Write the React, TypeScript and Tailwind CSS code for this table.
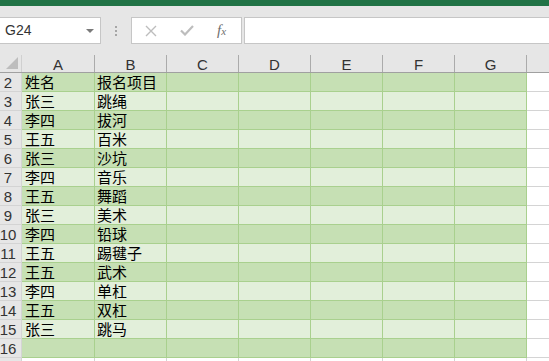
import React from 'react';

const names = ['姓名', '张三', '李四', '王五', '张三', '李四', '王五', '张三', '李四', '王五', '王五', '李四', '王五', '张三', ''];
const items = ['报名项目', '跳绳', '拔河', '百米', '沙坑', '音乐', '舞蹈', '美术', '铅球', '踢毽子', '武术', '单杠', '双杠', '跳马', ''];
const cols = ['A', 'B', 'C', 'D', 'E', 'F', 'G'];

const gridCols = 'grid-cols-[22px_73px_72px_72px_72px_72px_72px_72px_1fr]';

function CrossIcon() {
    return (
        <svg width="12" height="12" viewBox="0 0 12 12" fill="none" stroke="#bdbdbd" strokeWidth="1.4">
            <path d="M1 1l10 10M11 1L1 11" />
        </svg>
    );
}

function CheckIcon() {
    return (
        <svg width="14" height="11" viewBox="0 0 14 11" fill="none" stroke="#bdbdbd" strokeWidth="2.2">
            <path d="M1 5.5l4 4L13 1" />
        </svg>
    );
}

export default function App() {
    return (
        <div className="w-[549px] h-[361px] overflow-hidden bg-[#e6e6e6] font-['Liberation_Sans','Noto_Sans_CJK_SC',sans-serif]">
            {/* title strip */}
            <div className="h-[6px] bg-[#217346]" />

            {/* formula bar */}
            <div className="flex items-stretch h-[27px] mt-[11px]">
                <div className="w-[101px] bg-white border border-l-0 border-[#c6c6c6] flex items-center justify-between pl-[5px] pr-[6px]">
                    <span className="text-[14px] text-[#333]">G24</span>
                    <span className="w-0 h-0 border-l-[4px] border-r-[4px] border-t-[4px] border-l-transparent border-r-transparent border-t-[#7a7a7a]" />
                </div>
                <div className="w-[30px] flex flex-col items-center justify-center gap-[2px]">
                    <span className="w-[2px] h-[2px] bg-[#a6a6a6]" />
                    <span className="w-[2px] h-[2px] bg-[#a6a6a6]" />
                    <span className="w-[2px] h-[2px] bg-[#a6a6a6]" />
                </div>
                <div className="w-[111px] bg-white border border-[#c6c6c6] flex items-center pl-[13px]">
                    <CrossIcon />
                    <span className="ml-[23px]"><CheckIcon /></span>
                    <span className="ml-[23px] text-[15px] italic text-[#6e6e6e] font-['Liberation_Serif',serif] leading-none">
                        f<span className="text-[11px]">x</span>
                    </span>
                </div>
                <div className="flex-1 ml-[2px] bg-white border border-r-0 border-[#c6c6c6]" />
            </div>

            {/* column headers */}
            <div className={`grid ${gridCols} h-[18px] mt-[11px] border-b border-[#a0a0a0]`}>
                <div className="border-r border-[#d0d0d0] flex items-end justify-end pr-[3px] pb-[3px]">
                    {/* select-all corner */}
                    <div className="w-[12px] h-[12px] shrink-0 bg-[#bdbdbd] [clip-path:polygon(100%_0,100%_100%,0_100%)]" />
                </div>
                {cols.map((c) => (
                    <div key={c} className="border-r border-[#ababab] flex items-center justify-center text-[15px] text-[#333] leading-none pt-[1px]">
                        {c}
                    </div>
                ))}
                <div />
            </div>

            {/* sheet rows */}
            {names.map((n, i) => {
                const dark = i % 2 === 0;
                const fill = dark ? 'bg-[#c6e0b4]' : 'bg-[#e2efda]';
                return (
                    <div key={i} className={`grid ${gridCols} h-[19px]`}>
                        <div className="border-b border-r border-[#d4d4d4] pr-[5px] flex items-center justify-center text-[15px] text-[#333] leading-none">
                            {i + 2}
                        </div>
                        <div className={`${fill} border-b border-r border-[#a9d08e] pl-[3px] flex items-center text-[15px] text-black leading-none`}>
                            {n}
                        </div>
                        <div className={`${fill} border-b border-r border-[#a9d08e] pl-[2px] flex items-center text-[15px] text-black leading-none`}>
                            {items[i]}
                        </div>
                        {[0, 1, 2, 3, 4].map((k) => (
                            <div key={k} className={`${fill} border-b border-r border-[#a9d08e]`} />
                        ))}
                        <div className="bg-white border-b border-[#d4d4d4]" />
                    </div>
                );
            })}
            <div className={`grid ${gridCols} h-[19px]`}>
                <div className="border-r border-[#d4d4d4]" />
                {cols.map((c) => (
                    <div key={c} className="bg-white border-r border-[#d4d4d4]" />
                ))}
                <div className="bg-white" />
            </div>
        </div>
    );
}
